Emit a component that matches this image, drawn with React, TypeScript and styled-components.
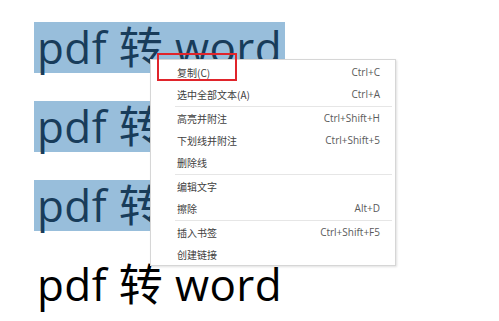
import React from "react";
import styled, { createGlobalStyle } from "styled-components";

const Global = createGlobalStyle`
  html, body { margin: 0; padding: 0; background: #ffffff; }
  body { width: 499px; height: 321px; overflow: hidden; }
`;

const Page = styled.div`
  position: relative;
  width: 499px;
  height: 321px;
  background: #ffffff;
  padding: 22px 0 0 34px;
  box-sizing: border-box;
  display: flex;
  flex-direction: column;
  align-items: flex-start;
  gap: 28px;
  font-family: "Open Sans", "Noto Sans CJK SC", sans-serif;
`;

const Line = styled.div<{ $selected?: boolean }>`
  height: 51px;
  box-sizing: border-box;
  padding: 0 3px 0 3px;
  display: flex;
  align-items: center;
  font-size: 44px;
  line-height: 51px;
  letter-spacing: 0.4px;
  white-space: nowrap;
  color: ${(p) => (p.$selected ? "#183c5a" : "#000000")};
  background: ${(p) => (p.$selected ? "#98bedb" : "transparent")};
`;

const Menu = styled.div`
  position: absolute;
  left: 150px;
  top: 59px;
  width: 246px;
  box-sizing: border-box;
  background: #ffffff;
  border: 1px solid #d6d6d6;
  box-shadow: 1px 1px 2px rgba(0, 0, 0, 0.12);
  padding: 1px 0 0;
  display: flex;
  flex-direction: column;
  font-family: "Noto Sans CJK SC", "Open Sans", sans-serif;
`;

const Item = styled.div`
  height: 22px;
  display: flex;
  align-items: center;
  justify-content: space-between;
  padding: 0 15px 0 26px;
  font-size: 10px;
  color: #404040;
`;

const Shortcut = styled.span`
  font-family: "Open Sans", sans-serif;
  font-size: 10px;
  color: #5a5a5a;
`;

const Separator = styled.div`
  height: 1px;
  margin: 1px 3px 0 24px;
  background: #e6e6e6;
`;

const Highlight = styled.div`
  position: absolute;
  left: 157px;
  top: 53px;
  width: 80px;
  height: 28px;
  box-sizing: border-box;
  border: 2px solid #e0242b;
`;

type Entry = { label: string; key?: string } | "sep";

const entries: Entry[] = [
  { label: "复制(C)", key: "Ctrl+C" },
  { label: "选中全部文本(A)", key: "Ctrl+A" },
  "sep",
  { label: "高亮并附注", key: "Ctrl+Shift+H" },
  { label: "下划线并附注", key: "Ctrl+Shift+5" },
  { label: "删除线" },
  "sep",
  { label: "编辑文字" },
  { label: "擦除", key: "Alt+D" },
  "sep",
  { label: "插入书签", key: "Ctrl+Shift+F5" },
  { label: "创建链接" },
];

export default function App() {
  return (
    <>
      <Global />
      <Page>
        <Line $selected>pdf 转 word</Line>
        <Line $selected>pdf 转 word</Line>
        <Line $selected>pdf 转 word</Line>
        <Line>pdf 转 word</Line>
        <Menu>
          {entries.map((e, i) =>
            e === "sep" ? (
              <Separator key={i} />
            ) : (
              <Item key={i}>
                <span>{e.label}</span>
                {e.key && <Shortcut>{e.key}</Shortcut>}
              </Item>
            )
          )}
        </Menu>
        <Highlight />
      </Page>
    </>
  );
}
